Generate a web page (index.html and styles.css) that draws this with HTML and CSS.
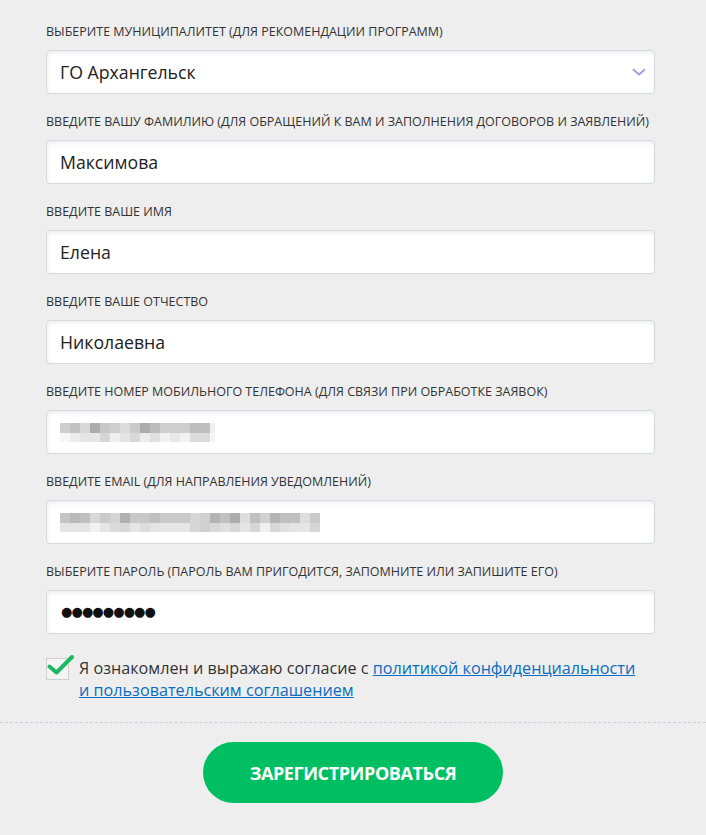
FILE: index.html
```html
<!DOCTYPE html>
<html lang="ru">
<head>
<meta charset="utf-8">
<title>Регистрация</title>
<link rel="stylesheet" href="styles.css">
</head>
<body>
<form class="reg-form">
  <div class="fields">
    <div class="field">
      <div class="label">Выберите муниципалитет (для рекомендации программ)</div>
      <div class="control select">
        <span class="value">ГО Архангельск</span>
        <svg class="chevron" width="14" height="8" viewBox="0 0 14 8"><path d="M1 1.2 L7 6.5 L13 1.2" fill="none" stroke="#a29de2" stroke-width="2"/></svg>
      </div>
    </div>
    <div class="field">
      <div class="label">Введите вашу фамилию (для обращений к вам и заполнения договоров и заявлений)</div>
      <div class="control"><span class="value">Максимова</span></div>
    </div>
    <div class="field">
      <div class="label">Введите ваше имя</div>
      <div class="control"><span class="value">Елена</span></div>
    </div>
    <div class="field">
      <div class="label">Введите ваше отчество</div>
      <div class="control"><span class="value">Николаевна</span></div>
    </div>
    <div class="field">
      <div class="label">Введите номер мобильного телефона (для связи при обработке заявок)</div>
      <div class="control">
        <svg class="blur" width="160" height="19" viewBox="0 0 160 19" shape-rendering="crispEdges">
          <g>
            <rect x="0" y="0" width="10" height="10" fill="#cdcdcd"/><rect x="10" y="0" width="10" height="10" fill="#c2c2c2"/><rect x="20" y="0" width="10" height="10" fill="#d8d8d8"/><rect x="30" y="0" width="10" height="10" fill="#acacac"/><rect x="40" y="0" width="10" height="10" fill="#c8c8c8"/><rect x="50" y="0" width="10" height="10" fill="#cecece"/><rect x="60" y="0" width="10" height="10" fill="#dcdcdc"/><rect x="70" y="0" width="10" height="10" fill="#cacaca"/><rect x="80" y="0" width="10" height="10" fill="#acacac"/><rect x="90" y="0" width="10" height="10" fill="#bcbcbc"/><rect x="100" y="0" width="10" height="10" fill="#cecece"/><rect x="110" y="0" width="10" height="10" fill="#cecece"/><rect x="120" y="0" width="10" height="10" fill="#cecece"/><rect x="130" y="0" width="10" height="10" fill="#bebebe"/><rect x="140" y="0" width="10" height="10" fill="#bebebe"/><rect x="150" y="0" width="5" height="10" fill="#f0f0f0"/>
            <rect x="0" y="10" width="10" height="9" fill="#f6f6f6"/><rect x="10" y="10" width="10" height="9" fill="#ececec"/><rect x="20" y="10" width="10" height="9" fill="#e6e6e6"/><rect x="30" y="10" width="10" height="9" fill="#e6e6e6"/><rect x="40" y="10" width="10" height="9" fill="#d6d6d6"/><rect x="50" y="10" width="10" height="9" fill="#f0f0f0"/><rect x="60" y="10" width="10" height="9" fill="#e4e4e4"/><rect x="70" y="10" width="10" height="9" fill="#d8d8d8"/><rect x="80" y="10" width="10" height="9" fill="#ececec"/><rect x="90" y="10" width="10" height="9" fill="#e0e0e0"/><rect x="100" y="10" width="10" height="9" fill="#f2f2f2"/><rect x="110" y="10" width="10" height="9" fill="#e8e8e8"/><rect x="120" y="10" width="10" height="9" fill="#f2f2f2"/><rect x="130" y="10" width="10" height="9" fill="#dcdcdc"/><rect x="140" y="10" width="10" height="9" fill="#dcdcdc"/><rect x="150" y="10" width="5" height="9" fill="#f6f6f6"/>
          </g>
        </svg>
      </div>
    </div>
    <div class="field">
      <div class="label">Введите email (для направления уведомлений)</div>
      <div class="control">
        <svg class="blur" width="262" height="19" viewBox="0 0 262 19" shape-rendering="crispEdges">
          <g>
            <rect x="0" y="0" width="10" height="10" fill="#c4c4c4"/><rect x="10" y="0" width="10" height="10" fill="#b8b8b8"/><rect x="20" y="0" width="10" height="10" fill="#c0c0c0"/><rect x="30" y="0" width="10" height="10" fill="#d8d8d8"/><rect x="40" y="0" width="10" height="10" fill="#cacaca"/><rect x="50" y="0" width="10" height="10" fill="#d4d4d4"/><rect x="60" y="0" width="10" height="10" fill="#b0b0b0"/><rect x="70" y="0" width="10" height="10" fill="#c8c8c8"/><rect x="80" y="0" width="10" height="10" fill="#c8c8c8"/><rect x="90" y="0" width="10" height="10" fill="#c0c0c0"/><rect x="100" y="0" width="10" height="10" fill="#cacaca"/><rect x="110" y="0" width="10" height="10" fill="#cacaca"/><rect x="120" y="0" width="10" height="10" fill="#cacaca"/><rect x="130" y="0" width="10" height="10" fill="#d6d6d6"/><rect x="140" y="0" width="10" height="10" fill="#d0d0d0"/><rect x="150" y="0" width="10" height="10" fill="#b4b4b4"/><rect x="160" y="0" width="10" height="10" fill="#c0c0c0"/><rect x="170" y="0" width="10" height="10" fill="#acacac"/><rect x="180" y="0" width="10" height="10" fill="#dedede"/><rect x="190" y="0" width="10" height="10" fill="#c0c0c0"/><rect x="200" y="0" width="10" height="10" fill="#d0d0d0"/><rect x="210" y="0" width="10" height="10" fill="#b4b4b4"/><rect x="220" y="0" width="10" height="10" fill="#c0c0c0"/><rect x="230" y="0" width="10" height="10" fill="#c0c0c0"/><rect x="240" y="0" width="10" height="10" fill="#dedede"/><rect x="250" y="0" width="10" height="10" fill="#cacaca"/>
            <rect x="0" y="10" width="10" height="9" fill="#e4e4e4"/><rect x="10" y="10" width="10" height="9" fill="#e4e4e4"/><rect x="20" y="10" width="10" height="9" fill="#e4e4e4"/><rect x="30" y="10" width="10" height="9" fill="#f2f2f2"/><rect x="40" y="10" width="10" height="9" fill="#e6e6e6"/><rect x="50" y="10" width="10" height="9" fill="#dcdcdc"/><rect x="60" y="10" width="10" height="9" fill="#d8d8d8"/><rect x="70" y="10" width="10" height="9" fill="#e6e6e6"/><rect x="80" y="10" width="10" height="9" fill="#dcdcdc"/><rect x="90" y="10" width="10" height="9" fill="#e4e4e4"/><rect x="100" y="10" width="10" height="9" fill="#e6e6e6"/><rect x="110" y="10" width="10" height="9" fill="#e6e6e6"/><rect x="120" y="10" width="10" height="9" fill="#e6e6e6"/><rect x="130" y="10" width="10" height="9" fill="#d6d6d6"/><rect x="140" y="10" width="10" height="9" fill="#d0d0d0"/><rect x="150" y="10" width="10" height="9" fill="#d8d8d8"/><rect x="160" y="10" width="10" height="9" fill="#e0e0e0"/><rect x="170" y="10" width="10" height="9" fill="#d8d8d8"/><rect x="180" y="10" width="10" height="9" fill="#e4e4e4"/><rect x="190" y="10" width="10" height="9" fill="#d6d6d6"/><rect x="200" y="10" width="10" height="9" fill="#f0f0f0"/><rect x="210" y="10" width="10" height="9" fill="#d8d8d8"/><rect x="220" y="10" width="10" height="9" fill="#e0e0e0"/><rect x="230" y="10" width="10" height="9" fill="#e4e4e4"/><rect x="240" y="10" width="10" height="9" fill="#e6e6e6"/><rect x="250" y="10" width="10" height="9" fill="#d6d6d6"/>
          </g>
        </svg>
      </div>
    </div>
    <div class="field">
      <div class="label">Выберите пароль (пароль вам пригодится, запомните или запишите его)</div>
      <div class="control"><span class="value dots">●●●●●●●●●</span></div>
    </div>
  </div>

  <div class="agree">
    <span class="checkbox">
      <svg class="check" width="28" height="26" viewBox="0 0 28 26"><path d="M2.5 14.5 L9.5 20.5 L25 5" fill="none" stroke="#1fb865" stroke-width="4" stroke-linecap="round" stroke-linejoin="round"/></svg>
    </span>
    <p class="agree-text">Я ознакомлен и выражаю согласие с <a href="#">политикой конфиденциальности и пользовательским соглашением</a></p>
  </div>

  <div class="divider"></div>

  <div class="actions">
    <button type="button" class="submit">Зарегистрироваться</button>
  </div>
</form>
</body>
</html>
```

FILE: styles.css
```css
html, body {
  margin: 0;
  padding: 0;
  background: #eeeeee;
}

body {
  font-family: "Open Sans", "Noto Sans", sans-serif;
  color: #333333;
}

.reg-form {
  padding-top: 23px;
}

.fields {
  padding: 0 51px 0 46px;
}

.field {
  margin-bottom: 19px;
}

.field:last-child {
  margin-bottom: 0;
}

.label {
  font-size: 12.5px;
  line-height: 17px;
  text-transform: uppercase;
  color: #333333;
  margin-bottom: 10px;
  white-space: nowrap;
}

.control {
  box-sizing: border-box;
  height: 44px;
  background: #ffffff;
  border: 1px solid #d6dade;
  border-radius: 4px;
  box-shadow: inset 1px 2px 4px rgba(0, 0, 0, 0.07);
  display: flex;
  align-items: center;
  padding: 0 14px 0 13px;
}

.select {
  justify-content: space-between;
}

.value {
  font-size: 17.7px;
  color: #222222;
  line-height: 24px;
}

.dots {
  font-family: "DejaVu Sans", sans-serif;
  font-size: 13px;
  letter-spacing: -0.9px;
  color: #111111;
  padding-left: 1px;
}

.chevron {
  display: block;
  margin-right: -6px;
}

.blur {
  display: block;
  margin-top: 1px;
}

.agree {
  display: flex;
  align-items: flex-start;
  padding: 22px 51px 0 46px;
}

.checkbox {
  position: relative;
  box-sizing: border-box;
  flex: 0 0 auto;
  width: 23px;
  height: 22px;
  border: 1px solid #d0d0d0;
  background: #f4f4f4;
  margin-top: 2px;
  margin-right: 10px;
}

.check {
  position: absolute;
  left: 0px;
  top: -7px;
}

.agree-text {
  margin: 0;
  font-size: 16.2px;
  line-height: 22px;
  color: #333333;
  max-width: 566px;
  margin-top: 1px;
}

.agree-text a {
  color: #0b6cc0;
  text-decoration: underline;
}

.divider {
  margin-top: 21px;
  border-top: 1px dashed #ccced9;
}

.actions {
  display: flex;
  justify-content: center;
  padding-top: 19px;
  padding-bottom: 30px;
}

.submit {
  width: 300px;
  height: 61px;
  border: none;
  border-radius: 31px;
  background: #00bf63;
  color: #ffffff;
  font-family: "Open Sans", "Noto Sans", sans-serif;
  font-weight: 700;
  font-size: 18px;
  text-transform: uppercase;
  letter-spacing: -0.4px;
  cursor: pointer;
}
```
